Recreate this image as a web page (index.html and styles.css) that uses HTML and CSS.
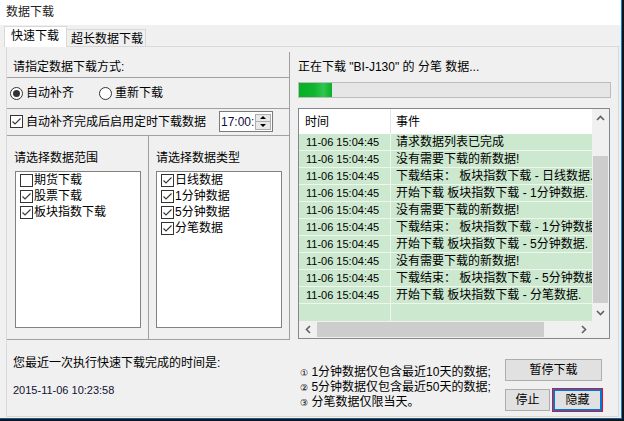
FILE: index.html
```html
<!DOCTYPE html>
<html>
<head>
<meta charset="utf-8">
<link rel="stylesheet" href="styles.css">
</head>
<body>
<div class="window">
  <div class="titlebar">数据下载</div>
  <div class="tabs">
    <div class="tab active">快速下载</div>
    <div class="tab inactive">超长数据下载</div>
  </div>
  <div class="panel">
    <div class="left">
      <div class="upper">
        <div class="sec sec-a">请指定数据下载方式:</div>
        <div class="sec sec-b">
          <div class="opt"><span class="radio on"></span>自动补齐</div>
          <div class="opt opt2"><span class="radio"></span>重新下载</div>
        </div>
        <div class="sec sec-c">
          <span class="check"><svg width="11" height="11" viewBox="0 0 11 11"><polyline points="1.5,5.5 4,8 9.5,2.5" fill="none" stroke="#3a3a3a" stroke-width="1.2"/></svg></span>
          <span>自动补齐完成后启用定时下载数据</span>
          <div class="timebox">
            <span class="timetext">17:00:</span>
            <div class="spin"><div class="spin-btn"><i class="tri-up"></i></div><div class="spin-btn"><i class="tri-down"></i></div></div>
          </div>
        </div>
        <div class="sec sec-d">
          <div class="col col1">
            <div class="col-title">请选择数据范围</div>
            <div class="listbox">
              <div class="item"><span class="check"></span>期货下载</div>
              <div class="item"><span class="check"><svg width="11" height="11" viewBox="0 0 11 11"><polyline points="1.5,5.5 4,8 9.5,2.5" fill="none" stroke="#3a3a3a" stroke-width="1.2"/></svg></span>股票下载</div>
              <div class="item"><span class="check"><svg width="11" height="11" viewBox="0 0 11 11"><polyline points="1.5,5.5 4,8 9.5,2.5" fill="none" stroke="#3a3a3a" stroke-width="1.2"/></svg></span>板块指数下载</div>
            </div>
          </div>
          <div class="col col2">
            <div class="col-title">请选择数据类型</div>
            <div class="listbox">
              <div class="item"><span class="check"><svg width="11" height="11" viewBox="0 0 11 11"><polyline points="1.5,5.5 4,8 9.5,2.5" fill="none" stroke="#3a3a3a" stroke-width="1.2"/></svg></span>日线数据</div>
              <div class="item"><span class="check"><svg width="11" height="11" viewBox="0 0 11 11"><polyline points="1.5,5.5 4,8 9.5,2.5" fill="none" stroke="#3a3a3a" stroke-width="1.2"/></svg></span>1分钟数据</div>
              <div class="item"><span class="check"><svg width="11" height="11" viewBox="0 0 11 11"><polyline points="1.5,5.5 4,8 9.5,2.5" fill="none" stroke="#3a3a3a" stroke-width="1.2"/></svg></span>5分钟数据</div>
              <div class="item"><span class="check"><svg width="11" height="11" viewBox="0 0 11 11"><polyline points="1.5,5.5 4,8 9.5,2.5" fill="none" stroke="#3a3a3a" stroke-width="1.2"/></svg></span>分笔数据</div>
            </div>
          </div>
        </div>
      </div>
      <div class="sec-e">
        <div>您最近一次执行快速下载完成的时间是:</div>
        <div class="lasttime">2015-11-06 10:23:58</div>
      </div>
    </div>
    <div class="right">
      <div class="status">正在下载 "BI-J130" 的 分笔 数据...</div>
      <div class="progress"><div class="fill"></div></div>
      <div class="listview">
        <div class="lv-content">
          <div class="lv-header"><div class="c1">时间</div><div class="c2">事件</div></div>
          <div class="lv-row"><div class="c1">11-06 15:04:45</div><div class="c2">请求数据列表已完成</div></div>
          <div class="lv-row"><div class="c1">11-06 15:04:45</div><div class="c2">没有需要下载的新数据!</div></div>
          <div class="lv-row"><div class="c1">11-06 15:04:45</div><div class="c2">下载结束： 板块指数下载 - 日线数据.</div></div>
          <div class="lv-row"><div class="c1">11-06 15:04:45</div><div class="c2">开始下载 板块指数下载 - 1分钟数据.</div></div>
          <div class="lv-row"><div class="c1">11-06 15:04:45</div><div class="c2">没有需要下载的新数据!</div></div>
          <div class="lv-row"><div class="c1">11-06 15:04:45</div><div class="c2">下载结束： 板块指数下载 - 1分钟数据.</div></div>
          <div class="lv-row"><div class="c1">11-06 15:04:45</div><div class="c2">开始下载 板块指数下载 - 5分钟数据.</div></div>
          <div class="lv-row"><div class="c1">11-06 15:04:45</div><div class="c2">没有需要下载的新数据!</div></div>
          <div class="lv-row"><div class="c1">11-06 15:04:45</div><div class="c2">下载结束： 板块指数下载 - 5分钟数据.</div></div>
          <div class="lv-row"><div class="c1">11-06 15:04:45</div><div class="c2">开始下载 板块指数下载 - 分笔数据.</div></div>
        </div>
        <div class="vscroll">
          <div class="sb-arrow"><svg width="9" height="6" viewBox="0 0 9 6"><polyline points="1,5 4.5,1.5 8,5" fill="none" stroke="#606060" stroke-width="1.6"/></svg></div>
          <div class="v-track"><div class="v-thumb"></div></div>
          <div class="sb-arrow"><svg width="9" height="6" viewBox="0 0 9 6"><polyline points="1,1 4.5,4.5 8,1" fill="none" stroke="#606060" stroke-width="1.6"/></svg></div>
        </div>
        <div class="hscroll">
          <div class="sb-arrow h"><svg width="6" height="9" viewBox="0 0 6 9"><polyline points="5,1 1.5,4.5 5,8" fill="none" stroke="#606060" stroke-width="1.6"/></svg></div>
          <div class="h-track"><div class="h-thumb"></div></div>
          <div class="sb-arrow h"><svg width="6" height="9" viewBox="0 0 6 9"><polyline points="1,1 4.5,4.5 1,8" fill="none" stroke="#606060" stroke-width="1.6"/></svg></div>
        </div>
        <div class="corner"></div>
      </div>
      <div class="bottom">
        <div class="notes">
          <div><span class="num">①</span> 1分钟数据仅包含最近10天的数据;</div>
          <div><span class="num">②</span> 5分钟数据仅包含最近50天的数据;</div>
          <div><span class="num">③</span> 分笔数据仅限当天。</div>
        </div>
        <div class="buttons">
          <div class="btn btn-pause">暂停下载</div>
          <div class="btn-row">
            <div class="btn btn-stop">停止</div>
            <div class="btn btn-hide">隐藏</div>
          </div>
        </div>
      </div>
    </div>
  </div>
</div>
</body>
</html>
```
FILE: styles.css
```css
* { box-sizing: border-box; }
html, body { margin: 0; padding: 0; }
body {
  width: 624px;
  height: 421px;
  overflow: hidden;
  background: #10151c;
  font-family: "Liberation Sans", "Noto Sans CJK SC", sans-serif;
  font-size: 12px;
  line-height: 14px;
  color: #000;
}
.window {
  width: 622px;
  height: 419px;
  background: #f0f0f0;
  border-right: 1px solid #1883d7;
  border-bottom: 1px solid #1c5a94;
  display: flex;
  flex-direction: column;
}
.titlebar {
  flex: none;
  height: 25px;
  background: #fff;
  padding-left: 6px;
  line-height: 24px;
  color: #222;
}
.tabs {
  flex: none;
  height: 21px;
  display: flex;
  align-items: flex-end;
  padding-left: 4px;
}
.tab {
  border: 1px solid #d9d9d9;
  border-bottom: none;
  background: #f0f0f0;
  white-space: nowrap;
}
.tab.active {
  height: 21px;
  margin-bottom: -1px;
  background: #fff;
  padding: 2px 7px 0 6px;
  position: relative;
  z-index: 1;
}
.tab.inactive {
  height: 17px;
  border-left: none;
  padding: 2px 2px 0 4px;
}
.panel {
  flex: none;
  margin-left: 6px;
  width: 613px;
  height: 371px;
  border: 1px solid #d9d9d9;
  display: flex;
}
.left {
  flex: none;
  width: 283px;
  display: flex;
  flex-direction: column;
}
.upper {
  background: linear-gradient(#a0a0a0, #a0a0a0) no-repeat right bottom / 1px calc(100% - 5px);
}
.sec { border-bottom: 1px solid #a0a0a0; white-space: nowrap; }
.sec-a { height: 31px; padding: 13px 0 0 6px; }
.sec-b { height: 31px; display: flex; align-items: center; padding-left: 3px; }
.sec-c { height: 27px; display: flex; align-items: center; padding: 0 0 1px 3px; }
.sec-d { height: 204px; display: flex; }
.opt { display: flex; align-items: center; }
.opt2 { margin-left: 25px; }
.radio {
  width: 13px; height: 13px;
  border: 1px solid #333;
  border-radius: 50%;
  background: #fff;
  margin-right: 3px;
  display: flex; align-items: center; justify-content: center;
}
.radio.on::after {
  content: "";
  width: 7px; height: 7px;
  border-radius: 50%;
  background: #333;
}
.check {
  flex: none;
  width: 13px; height: 13px;
  border: 1px solid #333;
  background: #fff;
  margin-right: 3px;
  display: flex;
}
.check svg { display: block; }
.timebox {
  flex: none;
  margin-left: 13px;
  width: 54px; height: 21px;
  border: 1px solid #7a7a7a;
  background: #fff;
  display: flex;
  align-items: center;
  padding-left: 1px;
}
.timetext { color: #101040; }
.spin {
  flex: none;
  margin-left: auto;
  margin-right: 1px;
  width: 16px; height: 16px;
  border: 1px solid #adadad;
  background: #e9e9e9;
  display: flex;
  flex-direction: column;
}
.spin-btn { flex: 1; display: flex; align-items: center; justify-content: center; }
.spin-btn + .spin-btn { border-top: 1px solid #adadad; }
.tri-up { width: 0; height: 0; border-left: 3px solid transparent; border-right: 3px solid transparent; border-bottom: 3px solid #000; }
.tri-down { width: 0; height: 0; border-left: 3px solid transparent; border-right: 3px solid transparent; border-top: 3px solid #000; }
.col { display: flex; flex-direction: column; }
.col1 { width: 142px; border-right: 1px solid #a0a0a0; }
.col2 { flex: 1; }
.col-title { padding: 15px 0 0 7px; }
.listbox {
  margin-top: 6px;
  width: 126px; height: 157px;
  border: 1px solid #828282;
  background: #fff;
}
.col1 .listbox { margin-left: 8px; }
.col2 .listbox { margin-left: 7px; }
.item { height: 16px; display: flex; align-items: center; padding-left: 4px; white-space: nowrap; }
.item .check { margin-right: 1px; }
.sec-e { flex: 1; padding: 16px 0 0 6px; white-space: nowrap; }
.lasttime { margin-top: 13px; font-size: 11px; color: #101030; }
.right {
  flex: 1;
  padding: 0 7px 0 8px;
  display: flex;
  flex-direction: column;
}
.status { margin-top: 13px; white-space: nowrap; }
.progress {
  margin-top: 8px;
  height: 16px;
  border: 1px solid #bcbcbc;
  background: #e6e6e6;
}
.fill {
  width: 33px; height: 100%;
  background: linear-gradient(90deg, #06b025 0%, #0fb52e 45%, #33c452 75%, #06b025 100%);
}
.listview {
  margin-top: 10px;
  width: 312px;
  height: 231px;
  border: 1px solid #828790;
  display: grid;
  grid-template-columns: 1fr 17px;
  grid-template-rows: 1fr 17px;
}
.lv-content {
  overflow: hidden;
  white-space: nowrap;
  background: linear-gradient(90deg, transparent 91px, #eef6ee 91px, #eef6ee 92px, transparent 92px), #cce8cf;
}
.lv-header { height: 25px; background: #fff; display: flex; align-items: center; }
.lv-header .c1 { flex: none; width: 92px; height: 100%; border-right: 1px solid #e5e5e5; padding-left: 6px; display: flex; align-items: center; }
.lv-header .c2 { padding-left: 5px; }
.lv-row { height: 17px; border-bottom: 1px solid #eef6ee; display: flex; align-items: center; }
.lv-row .c1 { flex: none; width: 92px; padding-left: 7px; font-size: 11px; }
.lv-row .c2 { flex: none; padding-left: 5px; }
.vscroll { background: #f0f0f0; display: flex; flex-direction: column; }
.sb-arrow { flex: none; height: 17px; display: flex; align-items: center; justify-content: center; }
.sb-arrow.h { width: 17px; height: auto; }
.v-track { flex: 1; padding: 30px 1px 0 1px; }
.v-thumb { height: 147px; background: #cdcdcd; }
.hscroll { background: #f0f0f0; display: flex; }
.h-track { flex: 1; padding: 1px 0 1px 1px; }
.h-thumb { width: 227px; height: 100%; background: #cdcdcd; }
.corner { background: #f0f0f0; }
.bottom { flex: 1; display: flex; }
.notes { margin: 26px 0 0 2px; white-space: nowrap; }
.num { font-family: "DejaVu Sans", sans-serif; font-size: 9px; }
.buttons { margin: 20px 8px 0 auto; width: 98px; }
.btn {
  background: #e1e1e1;
  border: 1px solid #adadad;
  text-align: center;
  line-height: 20px;
  white-space: nowrap;
}
.btn-pause { width: 97px; height: 22px; }
.btn-row { margin-top: 7px; display: flex; align-items: center; gap: 2px; }
.btn-stop { width: 45px; height: 22px; }
.btn-hide {
  width: 51px; height: 24px;
  border: 1px solid #e81123;
  box-shadow: inset 0 0 0 2px #0078d7;
  line-height: 22px;
}
```
